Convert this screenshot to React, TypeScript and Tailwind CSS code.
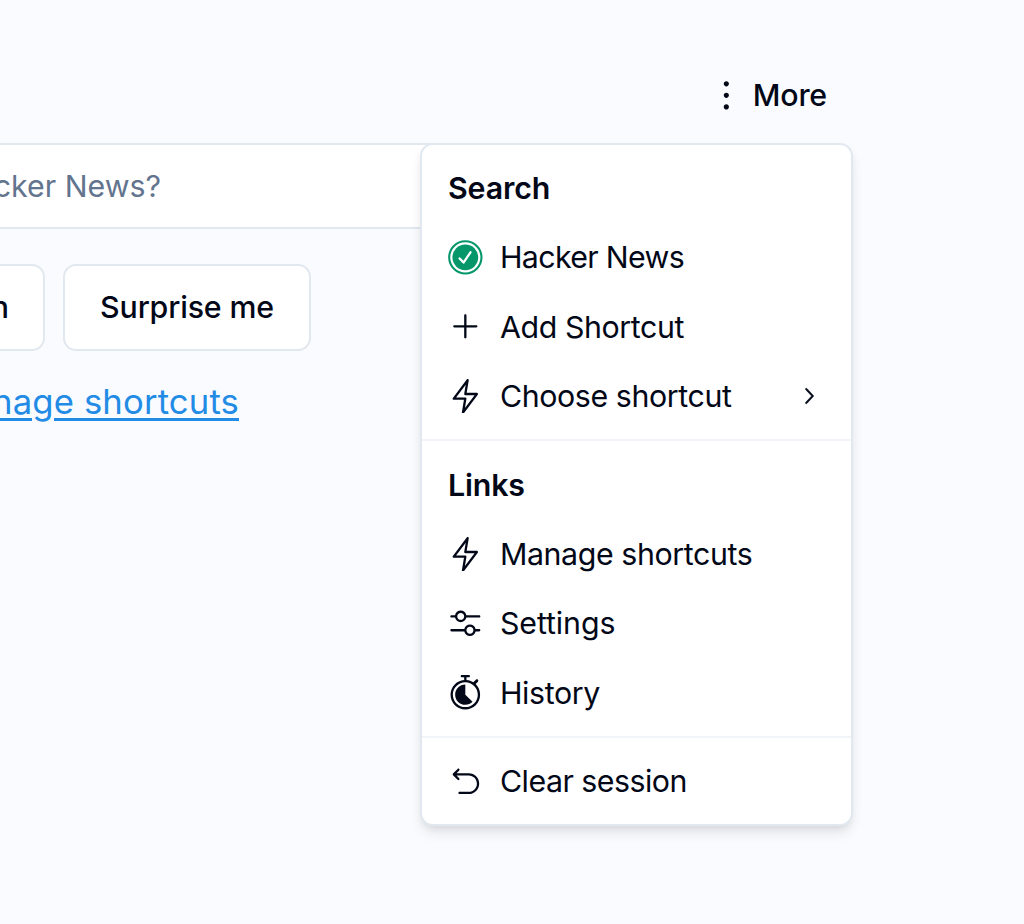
import type { ReactNode } from "react";
import {
  RxChevronRight,
  RxDotsVertical,
  RxLapTimer,
  RxLightningBolt,
  RxMixerHorizontal,
  RxPlus,
  RxReset,
} from "react-icons/rx";

const iconClass = "size-[34.67px] shrink-0";

function CheckBadge() {
  return (
    <svg className={iconClass} viewBox="0 0 35 35" fill="none">
      <circle cx="17.5" cy="17.5" r="16.3" stroke="#059669" strokeWidth="2.1" />
      <circle cx="17.5" cy="17.5" r="13" fill="#059669" />
      <path d="M11.8 18.6l3.9 4.2 7-10.4" stroke="white" strokeWidth="2.3" strokeLinecap="round" strokeLinejoin="round" />
    </svg>
  );
}

function Item({
  icon,
  label,
  chevron,
  tracking = "tracking-[-0.4px]",
}: {
  icon: ReactNode;
  label: string;
  chevron?: boolean;
  tracking?: string;
}) {
  return (
    <div className="flex h-[69.33px] items-center gap-[17.33px] px-[17.33px]">
      {icon}
      <span className={`whitespace-nowrap pt-px ${tracking}`}>{label}</span>
      {chevron && (
        <RxChevronRight className="ml-auto mr-[4.5px] size-[26px] shrink-0 stroke-current stroke-[0.25]" />
      )}
    </div>
  );
}

function Heading({ children }: { children: ReactNode }) {
  return (
    <div className="flex h-[69.33px] items-center px-[17.33px] pt-px font-semibold tracking-[-0.15px]">{children}</div>
  );
}

function Separator() {
  return <div className="-mx-[8.67px] my-[8.67px] h-[2px] bg-slate-100" />;
}

function Menu() {
  return (
    <div className="absolute left-[420px] top-[143px] h-[683px] w-[433px] rounded-[13px] border-2 border-slate-200 bg-white px-[8.67px] pt-[8.4px] shadow-[0_8px_13px_-2px_rgba(0,0,0,0.1),0_4px_8px_-4px_rgba(0,0,0,0.1)]">
      <Heading>Search</Heading>
      <Item icon={<CheckBadge />} label="Hacker News" tracking="tracking-[-0.66px]" />
      <Item icon={<RxPlus className={iconClass} />} label="Add Shortcut" />
      <Item icon={<RxLightningBolt className={iconClass} />} label="Choose shortcut" chevron />
      <Separator />
      <Heading>Links</Heading>
      <Item icon={<RxLightningBolt className={iconClass} />} label="Manage shortcuts" />
      <Item icon={<RxMixerHorizontal className={iconClass} />} label="Settings" tracking="tracking-[-0.1px]" />
      <Item icon={<RxLapTimer className={iconClass} />} label="History" />
      <Separator />
      <Item icon={<RxReset className={iconClass} />} label="Clear session" tracking="tracking-[-0.52px]" />
    </div>
  );
}

export default function App() {
  return (
    <div className="relative h-[924px] w-[1024px] overflow-hidden bg-[#fafbfe] font-['Inter','Liberation_Sans',sans-serif] text-[30.33px] leading-[43.33px] text-[#020817]">
      <header className="flex h-[143px] items-start justify-end pr-[197px] pt-[74px]">
        <button className="flex items-center gap-[9.5px] font-medium tracking-[-0.2px]">
          <RxDotsVertical className={iconClass} />
          More
        </button>
      </header>
      <div className="flex h-[86px] w-[640px] items-center border-y-2 border-slate-200 bg-white">
        <div className="flex w-[161px] justify-end whitespace-nowrap pt-0.5 text-slate-500">Ask Hacker News?</div>
      </div>
      <div className="mt-[35px] flex gap-[18px]">
        <button className="flex h-[87px] w-[45px] items-center justify-end rounded-r-[13px] border-2 border-l-0 border-slate-200 bg-white pr-[34px] font-medium">
          <span className="flex w-[8px] justify-end">Search</span>
        </button>
        <button className="h-[87px] w-[248px] whitespace-nowrap rounded-[13px] border-2 border-slate-200 bg-white font-medium tracking-[-0.15px]">
          Surprise me
        </button>
      </div>
      <div className="mt-[25px] flex w-[239px] justify-end">
        <a className="whitespace-nowrap text-[34.67px] leading-[50px] tracking-[0.15px] text-[#228be6] underline decoration-[3px] underline-offset-[4px]">
          Manage shortcuts
        </a>
      </div>
      <Menu />
    </div>
  );
}
